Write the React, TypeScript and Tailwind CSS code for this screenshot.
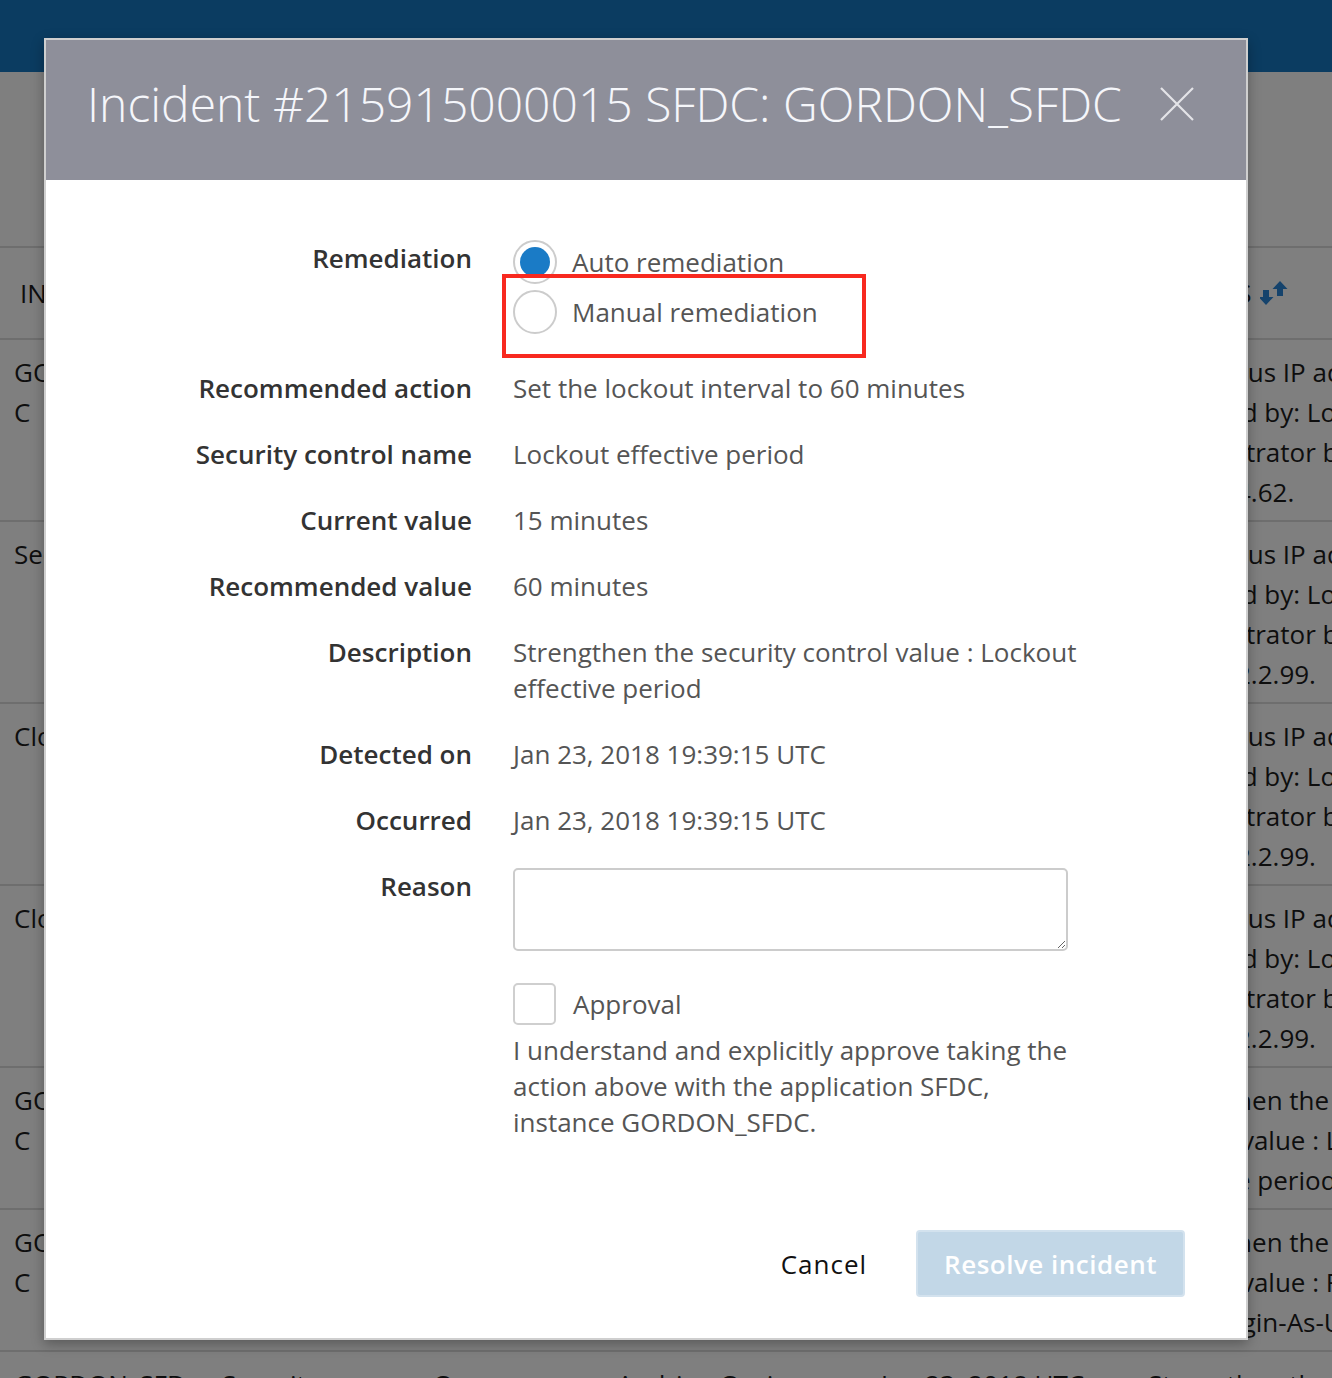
import React from 'react';

const cols = ['w-[208px]', 'w-[211px]', 'w-[184px]', 'w-[264px]', 'w-[267px]', 'w-[300px]'];

const rows = [
  { h: 'h-[182px]', cells: [['GORDON_SFD', 'C'], ['Security'], ['Open'], ['Admin'], ['Jan 23, 2018 UTC'], ['Suspicious IP address', 'Detected by: Login', 'Administrator by', '10.10.14.62.']] },
  { h: 'h-[182px]', cells: [['Security'], ['Security'], ['Open'], ['Admin'], ['Jan 23, 2018 UTC'], ['Suspicious IP address', 'Detected by: Login', 'Administrator by', '10.10.12.2.99.']] },
  { h: 'h-[182px]', cells: [['Cloud'], ['Security'], ['Open'], ['Admin'], ['Jan 23, 2018 UTC'], ['Suspicious IP address', 'Detected by: Login', 'Administrator by', '10.10.12.2.99.']] },
  { h: 'h-[182px]', cells: [['Cloud'], ['Security'], ['Open'], ['Admin'], ['Jan 23, 2018 UTC'], ['Suspicious IP address', 'Detected by: Login', 'Administrator by', '10.10.12.2.99.']] },
  { h: 'h-[142px]', cells: [['GORDON_SFD', 'C'], ['Security'], ['Open'], ['Admin'], ['Jan 23, 2018 UTC'], ['Strengthen the', 'control value : Lockout', 'effective period']] },
  { h: 'h-[142px]', cells: [['GORDON_SFD', 'C'], ['Security'], ['Open'], ['Admin'], ['Jan 23, 2018 UTC'], ['Strengthen the', 'control value : Force', 'after Login-As-User']] },
  { h: 'h-[80px]', cells: [['GORDON_SFD'], ['Security'], ['Open'], ['Audrian Osei'], ['Jan 23, 2018 UTC'], ['Strengthen the']] },
];

const details = [
  ['Recommended action', 'Set the lockout interval to 60 minutes'],
  ['Security control name', 'Lockout effective period'],
  ['Current value', '15 minutes'],
  ['Recommended value', '60 minutes'],
  ['Description', 'Strengthen the security control value : Lockout effective period'],
  ['Detected on', 'Jan 23, 2018 19:39:15 UTC'],
  ['Occurred', 'Jan 23, 2018 19:39:15 UTC'],
];

function Radio({ checked }: { checked?: boolean }) {
  return (
    <span className="flex h-[44px] w-[44px] shrink-0 items-center justify-center rounded-full border-2 border-[#cccccc] bg-white">
      {checked && <span className="h-[30px] w-[30px] rounded-full bg-[#1a7bc6]" />}
    </span>
  );
}

export default function App() {
  return (
    <div className="relative h-[1378px] w-[1332px] overflow-hidden bg-white font-['Open_Sans',sans-serif] text-[26px] text-[#1c1c1c]">
      {/* page behind the dialog */}
      <div className="h-[72px] bg-[#1678c2]" />
      <div className="h-[176px] border-b-2 border-[#dcdcdc]" />
      <div className="flex h-[92px] items-center border-b-2 border-[#dcdcdc] whitespace-nowrap">
        {['INCIDENT', 'TYPE', 'STATE', 'OWNER', 'DETECTED', 'STATUS'].map((t, i) => (
          <div key={t} className={`${cols[i]} flex shrink-0 items-center gap-[8px] overflow-hidden ${i === 5 ? 'pl-[25px]' : 'px-[20px]'}`}>
            <span>{t}</span>
            {i === 5 && (
              <svg width="30" height="26" viewBox="0 0 30 26" fill="#2a86d8">
                <path d="M3 10h6v7h4.5L6 25-1.5 17H3z" />
                <path d="M17 16h6V9h4.5L20 1l-7.5 8H17z" />
              </svg>
            )}
          </div>
        ))}
      </div>
      {rows.map((r, ri) => (
        <div key={ri} className={`flex ${r.h} border-b-2 border-[#dcdcdc] whitespace-nowrap leading-[40px]`}>
          {r.cells.map((lines, ci) => (
            <div key={ci} className={`${cols[ci]} shrink-0 overflow-hidden px-[14px] pt-[12px]`}>
              {lines.map((l, li) => (
                <div key={li}>{l}</div>
              ))}
            </div>
          ))}
        </div>
      ))}

      <div className="absolute inset-0 bg-black/50" />

      {/* dialog */}
      <div className="absolute left-[44px] top-[38px] w-[1204px] border-2 border-[#cfcfcf] bg-white shadow-[0_4px_12px_rgba(0,0,0,0.3)]">
        <div className="flex h-[140px] items-center justify-between bg-[#8e8f9a] pb-[12px] pl-[41px] pr-[52px]">
          <h1 className="whitespace-nowrap text-[48px] font-light leading-none text-[#f5f6fa]">
            Incident #215915000015 SFDC: GORDON_SFDC
          </h1>
          <svg width="34" height="34" viewBox="0 0 34 34" stroke="#e4e4e8" strokeWidth="2.2">
            <path d="M1 1l32 32M33 1L1 33" />
          </svg>
        </div>

        <div className="pb-[41px] pr-[61px] pt-[60px] leading-[36px]">
          <div className="grid grid-cols-[426px_570px] gap-x-[41px] gap-y-[30px]">
            <div className="text-right font-semibold text-[#333]">Remediation</div>
            <div className="mb-[6px] flex flex-col gap-[6px] text-[#555]">
              <label className="flex h-[44px] items-center gap-[15px]">
                <Radio checked />
                <span>Auto remediation</span>
              </label>
              <label className="relative flex h-[44px] items-center gap-[15px]">
                <Radio />
                <span>Manual remediation</span>
                <span className="pointer-events-none absolute -left-[11px] -top-[16px] h-[84px] w-[364px] border-4 border-[#f8291f]" />
              </label>
            </div>

            {details.map(([k, v]) => (
              <React.Fragment key={k}>
                <div className="text-right font-semibold text-[#333]">{k}</div>
                <div className="text-[#555]">{v}</div>
              </React.Fragment>
            ))}

            <div className="text-right font-semibold text-[#333]">Reason</div>
            <div>
              <textarea className="block h-[83px] w-[555px] rounded-[5px] border-2 border-[#cccccc] bg-white" />
            </div>

            <div />
            <div className="mt-[2px] text-[#555]">
              <label className="flex items-center gap-[17px]">
                <span className="h-[42px] w-[43px] shrink-0 rounded-[5px] border-2 border-[#cfcfcf]" />
                <span>Approval</span>
              </label>
              <p className="mt-[7px] w-[560px]">
                I understand and explicitly approve taking the action above with the application SFDC, instance GORDON_SFDC.
              </p>
            </div>
          </div>

          <div className="mt-[90px] flex items-center justify-end gap-[49px]">
            <button className="tracking-[1px] text-[#111]">Cancel</button>
            <button className="h-[67px] rounded-[4px] border-2 border-[#d3e2ee] bg-[#c2d7e7] px-[26px] font-semibold tracking-[0.5px] text-white">
              Resolve incident
            </button>
          </div>
        </div>
      </div>
    </div>
  );
}
